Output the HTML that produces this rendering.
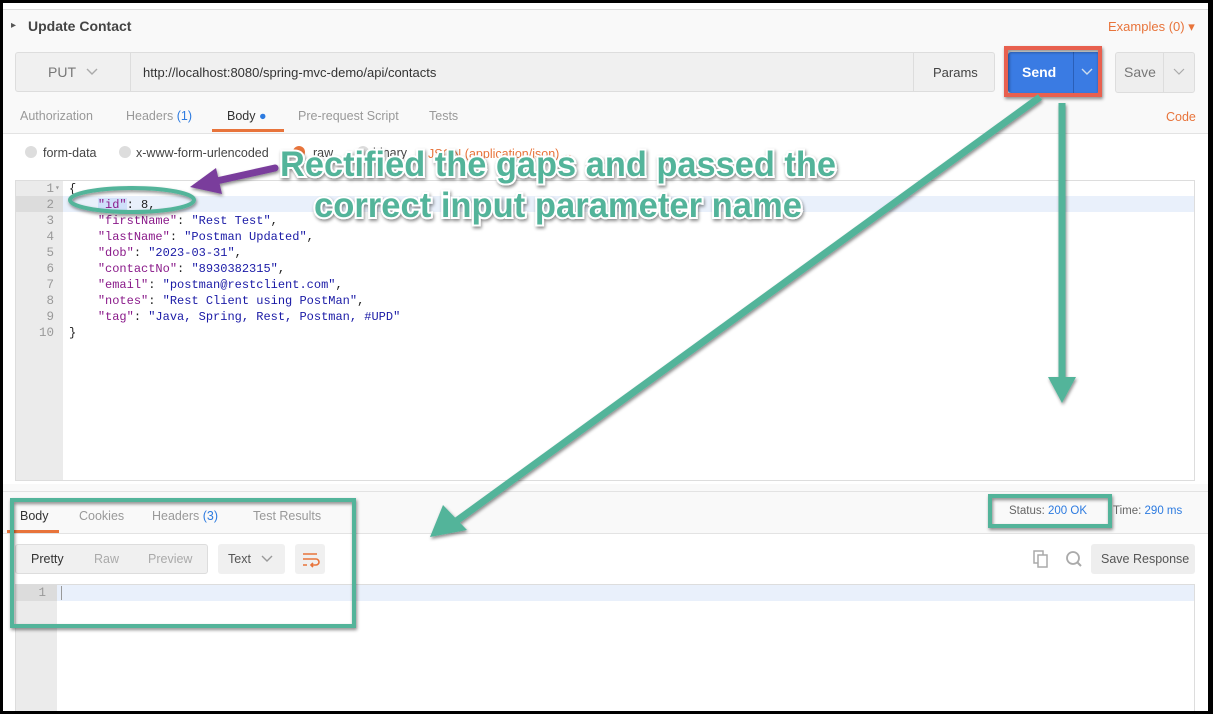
<!DOCTYPE html>
<html><head><meta charset="utf-8"><style>
*{box-sizing:border-box;margin:0;padding:0}
body{width:1213px;height:714px;overflow:hidden;background:#000;font-family:"Liberation Sans",sans-serif;position:relative}
.app{position:absolute;left:3px;top:3px;width:1205px;height:708px;background:#f9f9f9;overflow:hidden}
.abs{position:absolute}
.t{font-size:12.5px;color:#999;position:absolute}
.mono{font-family:"Liberation Mono",monospace;font-size:12px}
</style></head><body>
<div class="app">
 <div class="abs" style="left:0;top:0;width:1205px;height:7px;background:#fff;border-bottom:1px solid #ddd"></div>
 <div class="abs" style="left:8px;top:17px;font-size:10px;color:#555">▸</div>
 <div class="abs" style="left:25px;top:15px;font-size:14px;font-weight:bold;color:#444">Update Contact</div>
 <div class="abs" style="left:1105px;top:16px;font-size:13px;color:#e8743b">Examples (0) ▾</div>
 <div class="abs" style="left:12px;top:49px;width:980px;height:40px;background:#f0f0f0;border:1px solid #ddd;border-radius:3px"></div>
 <div class="abs" style="left:127px;top:49px;width:1px;height:40px;background:#ddd"></div>
 <div class="abs" style="left:910px;top:49px;width:1px;height:40px;background:#ddd"></div>
 <div class="abs" style="left:45px;top:61px;font-size:14px;color:#777">PUT</div>
 <svg class="abs" style="left:82px;top:64px" width="14" height="10"><path d="M2 2l5 5 5-5" stroke="#aaa" stroke-width="1.4" fill="none"/></svg>
 <div class="abs" style="left:140px;top:62px;font-size:13px;color:#333">http://localhost:8080/spring-mvc-demo/api/contacts</div>
 <div class="abs" style="left:930px;top:62px;font-size:13px;color:#444">Params</div>
 <div class="abs" style="left:1005px;top:49px;width:92px;height:41px;background:#3a7be3;border-radius:3px"></div>
 <div class="abs" style="left:1070px;top:49px;width:1px;height:41px;background:#2a5fb8"></div>
 <div class="abs" style="left:1019px;top:61px;font-size:14px;font-weight:bold;color:#fff">Send</div>
 <svg class="abs" style="left:1077px;top:64px" width="14" height="10"><path d="M2 2l5 5 5-5" stroke="#cde" stroke-width="1.4" fill="none"/></svg>
 <div class="abs" style="left:1112px;top:49px;width:80px;height:41px;background:#eee;border:1px solid #ddd;border-radius:3px"></div>
 <div class="abs" style="left:1160px;top:49px;width:1px;height:41px;background:#ddd"></div>
 <div class="abs" style="left:1121px;top:61px;font-size:14px;color:#777">Save</div>
 <svg class="abs" style="left:1169px;top:64px" width="14" height="10"><path d="M2 2l5 5 5-5" stroke="#aaa" stroke-width="1.2" fill="none"/></svg>
 <div class="t" style="left:17px;top:106px">Authorization</div>
 <div class="t" style="left:123px;top:106px">Headers <span style="color:#2d7be0">(1)</span></div>
 <div class="t" style="left:224px;top:106px;color:#333">Body <span style="color:#2d7be0">●</span></div>
 <div class="t" style="left:295px;top:106px">Pre-request Script</div>
 <div class="t" style="left:426px;top:106px">Tests</div>
 <div class="abs" style="left:1163px;top:107px;font-size:12.5px;color:#e8743b">Code</div>
 <div class="abs" style="left:209px;top:126px;width:72px;height:3px;background:#e8743b"></div>
 <div class="abs" style="left:0;top:130px;width:1205px;height:1px;background:#e3e3e3"></div>
 <div class="abs" style="left:0;top:131px;width:1205px;height:350px;background:#fff"></div>
 <div class="abs" style="left:22px;top:143px;width:12px;height:12px;border-radius:50%;background:#ddd"></div>
 <div class="abs" style="left:40px;top:143px;font-size:12.5px;color:#444">form-data</div>
 <div class="abs" style="left:116px;top:143px;width:12px;height:12px;border-radius:50%;background:#ddd"></div>
 <div class="abs" style="left:133px;top:143px;font-size:12.5px;color:#444">x-www-form-urlencoded</div>
 <div class="abs" style="left:290px;top:143px;width:12px;height:12px;border-radius:50%;background:#e8743b"></div>
 <div class="abs" style="left:310px;top:143px;font-size:12.5px;color:#444">raw</div>
 <div class="abs" style="left:354px;top:143px;width:12px;height:12px;border-radius:50%;background:#ddd"></div>
 <div class="abs" style="left:370px;top:143px;font-size:12.5px;color:#444">binary</div>
 <div class="abs" style="left:425px;top:143px;font-size:12.5px;color:#e8743b">JSON (application/json) ⌄</div>
 <div class="abs" style="left:12px;top:177px;width:1180px;height:301px;border:1px solid #ddd;background:#fff"></div>
 <div class="abs" style="left:13px;top:178px;width:47px;height:299px;background:#ebebeb"></div>
 <div class="abs" style="left:13px;top:193px;width:1178px;height:16px;background:#e9f0fb"></div>
 <div class="abs" style="left:13px;top:193px;width:47px;height:16px;background:#dcdcdc"></div>
 <div class="abs mono" style="left:13px;top:178px;width:38px;text-align:right;color:#999;line-height:16px;font-size:12.5px">1<br>2<br>3<br>4<br>5<br>6<br>7<br>8<br>9<br>10</div>
 <div class="abs mono" style="left:52px;top:178px;color:#999;font-size:8px;line-height:16px">▾</div>
 <pre class="abs mono" style="left:66px;top:178px;line-height:16px;color:#222">{
    <span style="color:#8a1a8a;background:#cfe0fa">"id"</span>: 8,
    <span style="color:#8a1a8a">"firstName"</span>: <span style="color:#1a1aa6">"Rest Test"</span>,
    <span style="color:#8a1a8a">"lastName"</span>: <span style="color:#1a1aa6">"Postman Updated"</span>,
    <span style="color:#8a1a8a">"dob"</span>: <span style="color:#1a1aa6">"2023-03-31"</span>,
    <span style="color:#8a1a8a">"contactNo"</span>: <span style="color:#1a1aa6">"8930382315"</span>,
    <span style="color:#8a1a8a">"email"</span>: <span style="color:#1a1aa6">"postman@restclient.com"</span>,
    <span style="color:#8a1a8a">"notes"</span>: <span style="color:#1a1aa6">"Rest Client using PostMan"</span>,
    <span style="color:#8a1a8a">"tag"</span>: <span style="color:#1a1aa6">"Java, Spring, Rest, Postman, #UPD"</span>
}</pre>
 <div class="abs" style="left:0;top:488px;width:1205px;height:1px;background:#e3e3e3"></div>
 <div class="t" style="left:17px;top:506px;color:#333">Body</div>
 <div class="t" style="left:76px;top:506px">Cookies</div>
 <div class="t" style="left:149px;top:506px">Headers <span style="color:#2d7be0">(3)</span></div>
 <div class="t" style="left:250px;top:506px">Test Results</div>
 <div class="abs" style="left:4px;top:527px;width:52px;height:3px;background:#e8743b"></div>
 <div class="abs" style="left:0;top:530px;width:1205px;height:1px;background:#e3e3e3"></div>
 <div class="abs" style="left:0;top:531px;width:1205px;height:180px;background:#fff"></div>
 <div class="abs" style="left:1006px;top:502px;font-size:11.5px;color:#666">Status: <span style="color:#2d7be0">200 OK</span></div>
 <div class="abs" style="left:1110px;top:502px;font-size:11.5px;color:#666">Time: <span style="color:#2d7be0">290 ms</span></div>
 <div class="abs" style="left:12px;top:541px;width:193px;height:30px;background:#f0f0f0;border:1px solid #ddd;border-radius:3px"></div>
 <div class="abs" style="left:28px;top:549px;font-size:12.5px;color:#333">Pretty</div>
 <div class="abs" style="left:91px;top:549px;font-size:12.5px;color:#aaa">Raw</div>
 <div class="abs" style="left:145px;top:549px;font-size:12.5px;color:#aaa">Preview</div>
 <div class="abs" style="left:215px;top:541px;width:67px;height:30px;background:#f0f0f0;border-radius:3px"></div>
 <div class="abs" style="left:225px;top:549px;font-size:12.5px;color:#555">Text</div>
 <svg class="abs" style="left:257px;top:551px" width="14" height="10"><path d="M2 2l5 5 5-5" stroke="#999" stroke-width="1.4" fill="none"/></svg>
 <div class="abs" style="left:292px;top:541px;width:30px;height:30px;background:#f0f0f0;border-radius:3px"></div>
 <svg class="abs" style="left:292px;top:541px" width="30" height="30"><path d="M8 10h14M8 15h13a3 3 0 0 1 0 6h-5M18 19l-2 2 2 2M8 21h4" stroke="#e8743b" stroke-width="1.6" fill="none"/></svg>
 <svg class="abs" style="left:1030px;top:546px" width="55" height="22"><rect x="1" y="2" width="9" height="12" fill="none" stroke="#aaa" stroke-width="1.5"/><rect x="5" y="6" width="9" height="12" fill="#fff" stroke="#aaa" stroke-width="1.5"/><circle cx="40" cy="9" r="6" fill="none" stroke="#aaa" stroke-width="1.8"/><path d="M44 13l4 4" stroke="#aaa" stroke-width="2"/></svg>
 <div class="abs" style="left:1088px;top:541px;width:104px;height:30px;background:#eee;border-radius:3px"></div>
 <div class="abs" style="left:1098px;top:549px;font-size:12.5px;color:#555">Save Response</div>
 <div class="abs" style="left:12px;top:581px;width:1180px;height:135px;border:1px solid #ddd;background:#fff"></div>
 <div class="abs" style="left:13px;top:582px;width:41px;height:130px;background:#ebebeb"></div>
 <div class="abs" style="left:13px;top:582px;width:1178px;height:16px;background:#e9f0fb"></div>
 <div class="abs" style="left:13px;top:582px;width:41px;height:16px;background:#dcdcdc"></div>
 <div class="abs mono" style="left:13px;top:582px;width:30px;text-align:right;color:#999;line-height:16px;font-size:12.5px">1</div>
 <div class="abs" style="left:58px;top:583px;width:1px;height:14px;background:#999"></div>
</div>
<svg class="abs" style="left:0;top:0" width="1213" height="714">
 <defs><filter id="sh" x="-10%" y="-10%" width="120%" height="120%"><feDropShadow dx="1" dy="2" stdDeviation="1.5" flood-color="#000" flood-opacity=".45"/></filter></defs>
 <g filter="url(#sh)">
  <rect x="1006" y="48" width="94" height="47" fill="none" stroke="#e8604f" stroke-width="4"/>
  <rect x="12" y="500" width="342" height="126" fill="none" stroke="#52b49a" stroke-width="4"/>
  <rect x="990" y="496" width="120" height="30" fill="none" stroke="#52b49a" stroke-width="4"/>
  <ellipse cx="132" cy="200" rx="62" ry="12" fill="none" stroke="#52b49a" stroke-width="4"/>
  <line x1="1040" y1="97" x2="455" y2="522" stroke="#52b49a" stroke-width="7"/>
  <polygon points="430,537 443,505 467,530" fill="#52b49a"/>
  <line x1="1062" y1="103" x2="1062" y2="380" stroke="#52b49a" stroke-width="7"/>
  <polygon points="1048,377 1076,377 1062,403" fill="#52b49a"/>
  <line x1="275" y1="168" x2="212" y2="182" stroke="#7a3d9c" stroke-width="7" stroke-linecap="round"/>
  <polygon points="190,187 216,168 222,194" fill="#7a3d9c"/>
 </g>
 <g font-family="Liberation Sans,sans-serif" font-weight="bold" font-size="35" text-anchor="middle" fill="#52b49a" stroke="#fff" stroke-width="4" paint-order="stroke" filter="url(#sh)">
  <text x="558" y="176" textLength="556" lengthAdjust="spacingAndGlyphs">Rectified the gaps and passed the</text>
  <text x="558" y="217" textLength="488" lengthAdjust="spacingAndGlyphs">correct input parameter name</text>
 </g>
</svg>
</body></html>
